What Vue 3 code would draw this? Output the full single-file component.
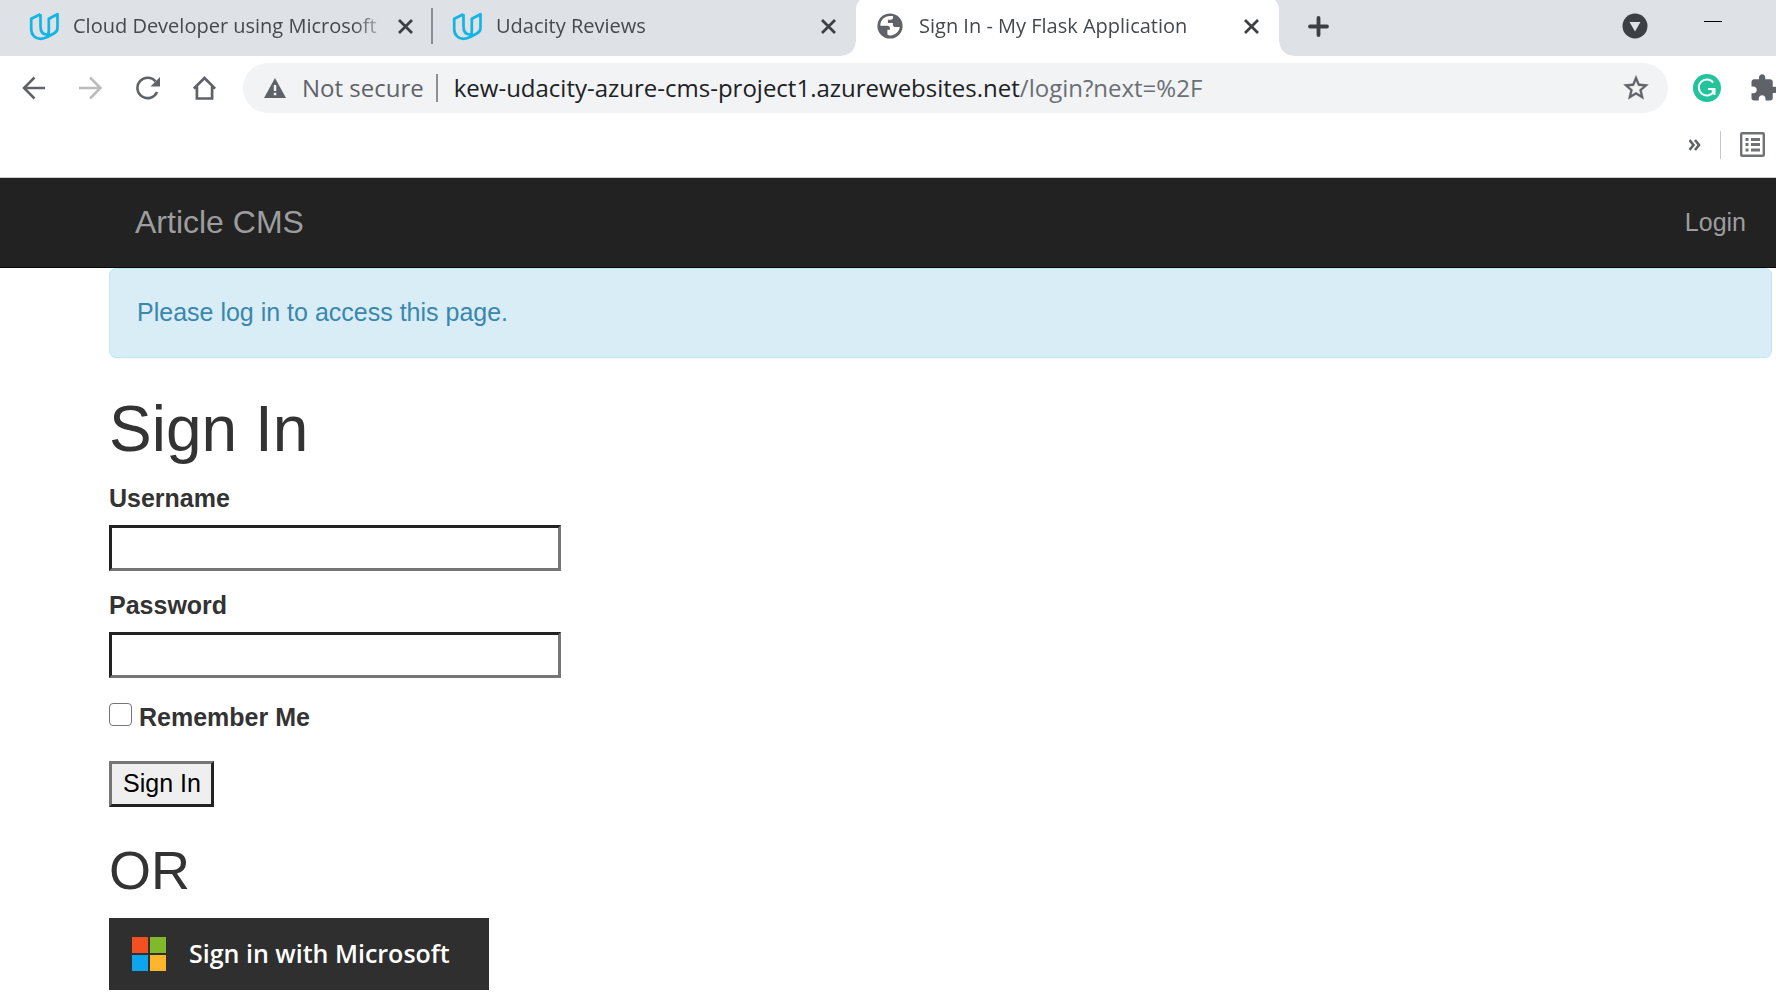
<script setup>
import { ref } from 'vue'

const tabs = [
  { title: 'Cloud Developer using Microsoft', icon: 'udacity', active: false },
  { title: 'Udacity Reviews', icon: 'udacity', active: false },
  { title: 'Sign In - My Flask Application', icon: 'globe', active: true },
]

const username = ref('')
const password = ref('')
const remember = ref(false)
</script>

<template>
  <div class="browser">
    <div class="tab-strip">
      <div class="tabs" role="tablist">
        <div v-for="tab in tabs" :key="tab.title" class="tab" :class="{ active: tab.active }" role="tab" :aria-selected="tab.active">
          <svg v-if="tab.icon === 'udacity'" class="favicon" viewBox="0 0 30 30" fill="none" stroke="#12b5e5" stroke-width="2.7" stroke-linejoin="round">
            <path d="M11.5 3.2 2.2 7.8V18c0 6 4 9.800 9.500 9.800 3 0 5-1 7-2l6.500-3.600c2.300-1.300 3.300-2.900 3.300-5.500V3.200l-8.700 4.600V20c0 2.500-.6 4.200-2 5.400" />
            <path d="M11.500 3.200V15.500c0 4.800 2.300 8 6.500 8 1 0 2-.3 3-.8" />
          </svg>
          <svg v-else class="favicon" viewBox="0 0 30 30">
            <circle cx="15" cy="15" r="12.600" fill="#5f6368" />
            <path d="M13 5.200c-5 1-8 5.200-7.600 9.600h6.800c1.800 0 2.800 1.200 2.800 2.800v1.200h-2.600v4.600c1.600 1.500 4.200 1.300 6.200.4 3.500-1.500 5.600-4.200 6.200-7.800h-4.200c-1.700 0-2.700-1-2.700-2.600v-1.300h-5v-3.400h2.700c1.600 0 2.500-1 2.500-2.500V5.300c-1.600-.4-3.400-.5-5.100-.1z" fill="#fff" />
          </svg>
          <span class="tab-title">{{ tab.title }}</span>
          <button class="icon-button" type="button" aria-label="Close tab">
            <svg width="15" height="15" viewBox="0 0 15 15" stroke="#3c4043" stroke-width="2.800"><path d="M1 1l13 13M14 1 1 14" /></svg>
          </button>
        </div>
      </div>
      <button class="icon-button new-tab" type="button" aria-label="New tab">
        <svg width="21" height="21" viewBox="0 0 21 21" stroke="#3c4043" stroke-width="3.800" stroke-linecap="round"><path d="M10.500 2v17M2 10.500h17" /></svg>
      </button>
      <div class="window-controls">
        <button class="icon-button" type="button" aria-label="Search tabs">
          <svg width="26" height="26" viewBox="0 0 26 26"><circle cx="13" cy="13" r="12.500" fill="#3c4043" /><path d="M7.500 9h11L13 18.500z" fill="#dee1e6" /></svg>
        </button>
        <button class="icon-button" type="button" aria-label="Minimize">
          <svg width="18" height="12" viewBox="0 0 18 12"><path d="M0 1h18v1H0z" fill="#000" /></svg>
        </button>
      </div>
    </div>

    <div class="toolbar">
      <div class="nav-buttons">
        <button class="icon-button" type="button" aria-label="Back">
          <svg width="24" height="24" viewBox="0 0 24 24" fill="none" stroke="#5f6368" stroke-width="2.500"><path d="M23 12H2M12.500 1.500 2 12l10.500 10.500" /></svg>
        </button>
        <button class="icon-button" type="button" aria-label="Forward">
          <svg width="24" height="24" viewBox="0 0 24 24" fill="none" stroke="#babcbe" stroke-width="2.500"><path d="M0 12H21.500M11 1.500 21.500 12 11 22.500" /></svg>
        </button>
        <button class="icon-button" type="button" aria-label="Reload">
          <svg width="24" height="24" viewBox="0 0 24 24"><path d="M21 16A10.200 10.200 0 1 1 19.500 5.400" fill="none" stroke="#5f6368" stroke-width="2.600" /><path d="M24 1v9.500h-9.500z" fill="#5f6368" /></svg>
        </button>
        <button class="icon-button" type="button" aria-label="Home">
          <svg width="24" height="24" viewBox="0 0 24 24" fill="none" stroke="#5f6368" stroke-width="2.700"><path d="M.9 12.600 11.500 2l10.600 10.600M3.900 10.500v12h15.200v-12" /></svg>
        </button>
      </div>
      <div class="address">
        <svg width="22" height="20" viewBox="0 0 22 20"><path d="M11 0 22 20H0z" fill="#5f6368" /><path d="M9.800 7h2.500v6H9.800zM9.800 14.700h2.500v2.500H9.800z" fill="#f1f3f4" /></svg>
        <span class="security">Not secure</span>
        <span class="address-divider"></span>
        <span class="url"><span class="host">kew-udacity-azure-cms-project1.azurewebsites.net</span>/login?next=%2F</span>
        <button class="icon-button" type="button" aria-label="Bookmark this page">
          <svg width="26" height="26" viewBox="1.500 1.500 21 21"><path fill="#5f6368" stroke="#5f6368" stroke-width=".3" d="m22 9.240-7.190-.62L12 2 9.190 8.630 2 9.240l5.460 4.730L5.820 21 12 17.270 18.180 21l-1.630-7.030L22 9.240zM12 15.400l-3.760 2.270 1-4.280-3.320-2.880 4.380-.38L12 6.100l1.710 4.040 4.380.38-3.320 2.880 1 4.280L12 15.400z" /></svg>
        </button>
      </div>
      <button class="icon-button" type="button" aria-label="Grammarly">
        <svg width="28" height="28" viewBox="0 0 28 28"><circle cx="14" cy="14" r="14" fill="#22c49b" /><path d="M20.200 8.600A8 8 0 1 0 21 17" fill="none" stroke="#fff" stroke-width="2" /><path d="M15 15h6.500v6" fill="none" stroke="#fff" stroke-width="2" /><path d="M17 14.500h5V21z" fill="#fff" /></svg>
      </button>
      <button class="icon-button extensions" type="button" aria-label="Extensions">
        <svg width="30" height="30" viewBox="0 0 24 24"><path fill="#5f6368" d="M20.500 11H19V7c0-1.100-.9-2-2-2h-4V3.500C13 2.120 11.880 1 10.500 1S8 2.120 8 3.500V5H4c-1.100 0-1.990.9-1.990 2v3.800H3.500c1.490 0 2.700 1.210 2.700 2.700s-1.210 2.700-2.700 2.700H2V20c0 1.100.9 2 2 2h3.800v-1.500c0-1.490 1.210-2.700 2.700-2.700 1.490 0 2.700 1.210 2.700 2.700V22H17c1.100 0 2-.9 2-2v-4h1.500c1.380 0 2.500-1.120 2.500-2.500S21.880 11 20.500 11z" /></svg>
      </button>
    </div>

    <div class="bookmarks">
      <button class="icon-button" type="button" aria-label="More bookmarks">
        <svg width="12" height="12" viewBox="0 0 12 12" fill="none" stroke="#5f6368" stroke-width="2.600"><path d="M.5 1l4 5-4 5M6 1l4 5-4 5" /></svg>
      </button>
      <span class="bookmark-divider"></span>
      <button class="icon-button" type="button" aria-label="Reading list">
        <svg width="25" height="25" viewBox="0 0 25 25"><rect x="1.200" y="1.200" width="22.600" height="22.600" rx="1" fill="none" stroke="#6e7276" stroke-width="2.400" /><path fill="#6e7276" d="M5.500 6h3v3h-3zM11 6h9v3h-9zM5.500 11h3v3h-3zM11 11h9v3h-9zM5.500 16.500h3v3h-3zM11 16.500h9v3h-9z" /></svg>
      </button>
    </div>
  </div>

  <nav class="navbar">
    <a class="brand" href="#">Article CMS</a>
    <a class="login" href="#">Login</a>
  </nav>

  <main class="content">
    <div class="alert" role="alert">Please log in to access this page.</div>
    <h1>Sign In</h1>
    <form @submit.prevent>
      <div class="field">
        <label for="username">Username</label>
        <input id="username" v-model="username" type="text">
      </div>
      <div class="field">
        <label for="password">Password</label>
        <input id="password" v-model="password" type="password">
      </div>
      <div class="remember">
        <input id="remember" v-model="remember" type="checkbox">
        <label for="remember">Remember Me</label>
      </div>
      <button class="submit" type="submit">Sign In</button>
    </form>
    <h2>OR</h2>
    <a class="microsoft" href="#">
      <svg width="34" height="34" viewBox="0 0 34 34"><path d="M0 0h16v16H0z" fill="#f25022" /><path d="M18 0h16v16H18z" fill="#80b92a" /><path d="M0 18h16v16H0z" fill="#0ca5ee" /><path d="M18 18h16v16H18z" fill="#fdb62b" /></svg>
      <span class="microsoft-text">Sign in with Microsoft</span>
    </a>
  </main>
</template>

<style>
body {
  margin: 0;
  background: #fff;
  font-family: "Liberation Sans", Arial, sans-serif;
  font-size: 25px;
  line-height: 36px;
  color: #333;
}
</style>

<style scoped>
* {
  box-sizing: border-box;
}

svg {
  display: block;
  flex: none;
}

.browser {
  overflow: hidden;
  border-bottom: 1px solid #ccc;
  font-family: "Segoe UI", "Open Sans", "Noto Sans", sans-serif;
}

.icon-button {
  flex: none;
  padding: 0;
  border: 0;
  background: none;
}

.tab-strip {
  display: flex;
  align-items: center;
  height: 56px;
  padding: 0 54px 4px 10px;
  background: #dee1e6;
}

.tabs {
  display: flex;
  align-items: center;
}

.tab {
  position: relative;
  display: flex;
  align-items: center;
  width: 423px;
  height: 36px;
  padding: 0 20px 0 19px;
  font-size: 20px;
  color: #45494d;
}

.tab:first-child {
  padding-right: 18px;
  border-right: 2px solid #8c9094;
}

.tab.active {
  height: 60px;
  border-radius: 14px 14px 0 0;
  background: #fff;
}

.tab.active::before,
.tab.active::after {
  content: "";
  position: absolute;
  bottom: 0;
  width: 14px;
  height: 14px;
}

.tab.active::before {
  right: 100%;
  background: radial-gradient(circle at 0 0, transparent 13px, #fff 14px);
}

.tab.active::after {
  left: 100%;
  background: radial-gradient(circle at 100% 0, transparent 13px, #fff 14px);
}

.favicon {
  width: 30px;
  height: 30px;
}

.tab-title {
  flex: 1;
  margin: 0 6px 0 14px;
  overflow: hidden;
  white-space: nowrap;
  mask-image: linear-gradient(to right, #000 280px, transparent 318px);
}

.new-tab {
  margin-left: 29px;
}

.window-controls {
  display: flex;
  align-items: center;
  gap: 56px;
  margin-left: auto;
}

.toolbar {
  display: flex;
  align-items: center;
  height: 64px;
  padding-left: 22px;
}

.nav-buttons {
  display: flex;
  gap: 33px;
  margin-right: 26px;
}

.address {
  display: flex;
  flex: 1;
  align-items: center;
  height: 50px;
  margin-right: 25px;
  padding: 0 19px 0 21px;
  border-radius: 25px;
  background: #f1f3f4;
  font-size: 24px;
  white-space: nowrap;
  color: #5f6368;
}

.security {
  margin: 0 12px 0 16px;
}

.address-divider {
  width: 2px;
  height: 28px;
  margin-right: 16px;
  background: #8c9094;
}

.url {
  flex: 1;
  color: #6b6f73;
}

.host {
  color: #202124;
}

.extensions {
  margin: 0 -3px 0 28px;
}

.bookmarks {
  display: flex;
  align-items: center;
  justify-content: flex-end;
  height: 57px;
  padding: 0 11px 8px 0;
}

.bookmark-divider {
  width: 1px;
  height: 28px;
  margin: 0 19px;
  background: #c4c7ca;
}

.navbar {
  display: flex;
  align-items: center;
  justify-content: space-between;
  height: 90px;
  padding: 0 30px 2px 135px;
  border-bottom: 1px solid #080808;
  background: #222;
}

.navbar a {
  color: #9d9d9d;
  text-decoration: none;
}

.brand {
  font-size: 32px;
}

.content {
  padding: 0 4px 12px 109px;
}

.alert {
  padding: 25px 27px 27px;
  border: 1px solid #bce8f1;
  border-radius: 7px;
  background: #d9edf7;
  color: #3a87ad;
}

h1,
h2 {
  font-weight: 400;
}

h1 {
  margin: 36px 0 15px;
  font-size: 64px;
  line-height: 71px;
}

h2 {
  margin: 33px 0 18px;
  font-size: 54px;
  line-height: 60px;
}

label {
  font-weight: 700;
}

.field {
  display: flex;
  flex-direction: column;
  gap: 9px;
  margin-bottom: 16px;
}

.field input {
  width: 452px;
  max-width: 100%;
  height: 46px;
  padding: 2px 4px;
  border: 3px solid;
  border-color: #222 #767676 #767676 #222;
  background: #fff;
  font: inherit;
}

.remember {
  display: flex;
  gap: 7px;
  margin: 21px 0 26px;
}

.remember input {
  appearance: none;
  width: 23px;
  height: 23px;
  margin: 4px 0 0;
  border: 1px solid #767676;
  border-radius: 4px;
  background: #fff;
}

.remember input:checked {
  background: #0075ff;
}

.submit {
  display: block;
  height: 46px;
  padding: 0 10px 2px 11px;
  border: 3px solid;
  border-color: #767676 #222 #222 #767676;
  background: #efefef;
  font: inherit;
  color: #000;
}

.microsoft {
  display: flex;
  align-items: center;
  gap: 23px;
  width: 380px;
  height: 72px;
  padding-left: 23px;
  background: #2f2f2f;
  font-family: "Segoe UI", "Open Sans", "Noto Sans", sans-serif;
  font-size: 25px;
  font-weight: 600;
  color: #fff;
  text-decoration: none;
  white-space: nowrap;
}

.microsoft-text {
  padding-bottom: 2px;
}
</style>
